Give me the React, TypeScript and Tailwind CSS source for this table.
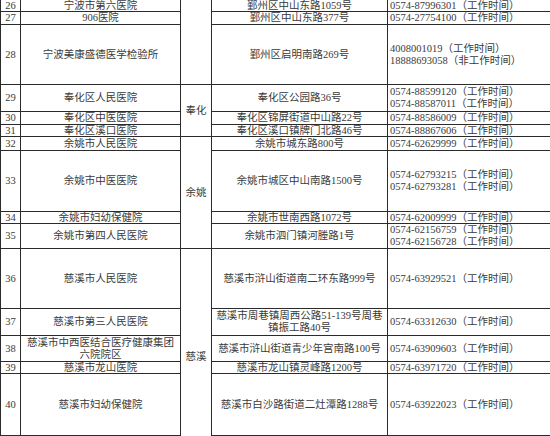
import { Fragment } from "react";

type Row = {
  n: number;
  name: string[];
  addr: string[];
  phone: string[];
  region?: { text: string; span: string };
};

const rows: Row[] = [
  { n: 26, name: ["宁波市第六医院"], addr: ["鄞州区中山东路1059号"], phone: ["0574-87996301（工作时间）"], region: { text: "", span: "row-span-3" } },
  { n: 27, name: ["906医院"], addr: ["鄞州区中山东路377号"], phone: ["0574-27754100（工作时间）"] },
  { n: 28, name: ["宁波美康盛德医学检验所"], addr: ["鄞州区启明南路269号"], phone: ["4008001019（工作时间）", "18888693058（非工作时间）"] },
  { n: 29, name: ["奉化区人民医院"], addr: ["奉化区公园路36号"], phone: ["0574-88599120（工作时间）", "0574-88587011（工作时间）"], region: { text: "奉化", span: "row-span-3" } },
  { n: 30, name: ["奉化区中医医院"], addr: ["奉化区锦屏街道中山路22号"], phone: ["0574-88586009（工作时间）"] },
  { n: 31, name: ["奉化区溪口医院"], addr: ["奉化区溪口镇牌门北路46号"], phone: ["0574-88867606（工作时间）"] },
  { n: 32, name: ["余姚市人民医院"], addr: ["余姚市城东路800号"], phone: ["0574-62629999（工作时间）"], region: { text: "余姚", span: "row-span-4" } },
  { n: 33, name: ["余姚市中医医院"], addr: ["余姚市城区中山南路1500号"], phone: ["0574-62793215（工作时间）", "0574-62793281（工作时间）"] },
  { n: 34, name: ["余姚市妇幼保健院"], addr: ["余姚市世南西路1072号"], phone: ["0574-62009999（工作时间）"] },
  { n: 35, name: ["余姚市第四人民医院"], addr: ["余姚市泗门镇河塍路1号"], phone: ["0574-62156759（工作时间）", "0574-62156728（工作时间）"] },
  { n: 36, name: ["慈溪市人民医院"], addr: ["慈溪市浒山街道南二环东路999号"], phone: ["0574-63929521（工作时间）"], region: { text: "慈溪", span: "row-span-6" } },
  { n: 37, name: ["慈溪市第三人民医院"], addr: ["慈溪市周巷镇周西公路51-139号周巷", "镇振工路40号"], phone: ["0574-63312630（工作时间）"] },
  { n: 38, name: ["慈溪市中西医结合医疗健康集团", "六院院区"], addr: ["慈溪市浒山街道青少年宫南路100号"], phone: ["0574-63909603（工作时间）"] },
  { n: 39, name: ["慈溪市龙山医院"], addr: ["慈溪市龙山镇灵峰路1200号"], phone: ["0574-63971720（工作时间）"] },
  { n: 40, name: ["慈溪市妇幼保健院"], addr: ["慈溪市白沙路街道二灶潭路1288号"], phone: ["0574-63922023（工作时间）"] },
];

function Lines({ items }: { items: string[] }) {
  return (
    <>
      {items.map((t, i) => (
        <span key={i} className="block whitespace-nowrap">
          {t}
        </span>
      ))}
    </>
  );
}

const cell = "bg-white flex flex-col justify-center items-center text-center";

export default function App() {
  return (
    <div className="w-[550px] h-[436px] overflow-hidden bg-white">
      <div className="-mt-px w-max grid grid-cols-[19px_159px_30px_175px_170px] grid-rows-[11px_12px_59px_26px_12px_11px_13px_60px_11px_24px_59px_26px_25px_11px_61px_28px] gap-px p-px bg-[#2b2b2b] text-[#3a3a3a] text-[10.5px] leading-[12px] font-['Liberation_Serif','Noto_Sans_CJK_SC',serif]">
        {rows.map((r) => (
          <Fragment key={r.n}>
            <div className={cell}>{r.n}</div>
            <div className={cell}>
              <Lines items={r.name} />
            </div>
            {r.region && <div className={`${cell} ${r.region.span}`}>{r.region.text}</div>}
            <div className={cell}>
              <Lines items={r.addr} />
            </div>
            <div className="bg-white flex flex-col justify-center pl-[2px]">
              <Lines items={r.phone} />
            </div>
          </Fragment>
        ))}
        {/* row 41, only its top border shows */}
        <div className={cell} />
        <div className={cell} />
        <div className={cell} />
        <div className={cell} />
      </div>
    </div>
  );
}
